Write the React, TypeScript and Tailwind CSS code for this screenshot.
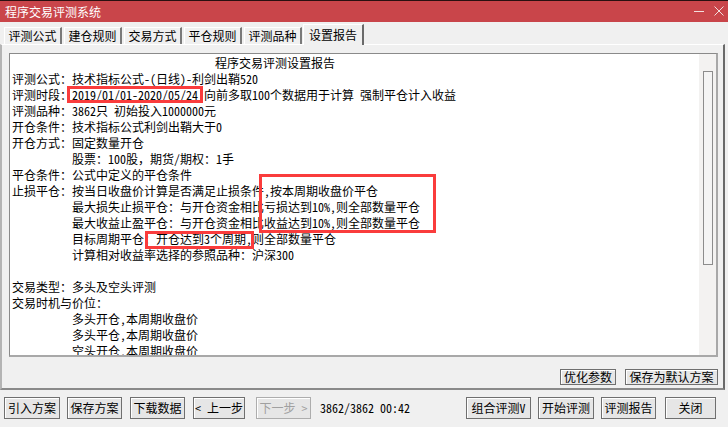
import React from 'react';

const FONT = "font-['Noto_Sans_CJK_SC','Noto_Sans',sans-serif] [font-feature-settings:'hwid']";

const tabs = ['评测公式', '建仓规则', '交易方式', '平仓规则', '评测品种'];

type Line = { label?: string; text: React.ReactNode; indent?: boolean; pad?: string };

const lines: Line[] = [
    { text: '程序交易评测设置报告', pad: 'pl-[203px]' },
    { label: '评测公式：', text: '技术指标公式-(日线)-利剑出鞘520' },
    { label: '评测时段：', text: '2019/01/01-2020/05/24 向前多取100个数据用于计算 强制平仓计入收益' },
    { label: '评测品种：', text: '3862只 初始投入1000000元' },
    { label: '开仓条件：', text: '技术指标公式利剑出鞘大于0' },
    { label: '开仓方式：', text: '固定数量开仓' },
    {
        indent: true,
        text: (
            <>
                股票：100股<span className="[font-feature-settings:normal]">，</span>期货/期权：1手
            </>
        ),
    },
    { label: '平仓条件：', text: '公式中定义的平仓条件' },
    { label: '止损平仓：', text: '按当日收盘价计算是否满足止损条件,按本周期收盘价平仓' },
    { indent: true, text: '最大损失止损平仓：与开仓资金相比亏损达到10%,则全部数量平仓' },
    { indent: true, text: '最大收益止盈平仓：与开仓资金相比收益达到10%,则全部数量平仓' },
    { indent: true, text: '目标周期平仓：开仓达到3个周期,则全部数量平仓' },
    { indent: true, text: '计算相对收益率选择的参照品种：沪深300' },
    { text: '' },
    { label: '交易类型：', text: '多头及空头评测' },
    { label: '交易时机与价位：', text: '' },
    { indent: true, text: '多头开仓,本周期收盘价' },
    { indent: true, text: '多头平仓,本周期收盘价' },
    { indent: true, text: '空头开仓,本周期收盘价' },
];

const Btn: React.FC<{ w: string; h?: string; disabled?: boolean; className?: string; children: React.ReactNode }> = ({ w, h = 'h-[22px]', disabled, className = '', children }) => (
    <div
        className={`${w} ${h} ${className} flex items-center justify-center border ${disabled ? 'border-[#adadad] text-[#a0a0a0]' : 'border-[#6f6f6f] text-black'} bg-[#e6e6e6] shadow-[inset_1px_1px_0_#fff] whitespace-nowrap`}
    >
        {children}
    </div>
);

export default function App() {
    return (
        <div className={`w-[728px] h-[427px] bg-[#f0f0f0] flex flex-col overflow-hidden text-[12px] leading-[16px] ${FONT}`}>
            {/* title bar */}
            <div className="h-[22px] bg-[#c9454a] border-t border-t-[#2a1010] flex items-center relative">
                <span className="ml-[5px] text-white text-[12px]">程序交易评测系统</span>
                <div className="absolute left-[694px] top-[10px] w-[10px] h-px bg-[#f2dede]" />
                <svg className="absolute left-[714px] top-[5px]" width="10" height="10" viewBox="0 0 10 10">
                    <path d="M0.5 0.5 L9.5 9.5 M9.5 0.5 L0.5 9.5" stroke="#f2dede" strokeWidth="1" />
                </svg>
            </div>

            {/* tabs */}
            <div className="h-[22px] flex items-end pl-[4px] gap-[2px]">
                {tabs.map((t) => (
                    <div key={t} className="w-[58px] h-[17px] border-t border-l border-white border-r-2 border-r-[#7a7a7a] flex items-center justify-center">
                        {t}
                    </div>
                ))}
                <div className="relative z-10 ml-[-1px] mb-[-1px] w-[61px] h-[21px] bg-[#f0f0f0] border-t border-l border-white border-r-2 border-r-[#6a6a6a] flex items-center justify-center pb-[1px]">
                    设置报告
                </div>
            </div>

            {/* panel */}
            <div className="h-[346px] w-[725px] border-t border-t-white border-l-2 border-l-[#b4b4b4] border-r-2 border-r-[#6a6a6a] border-b-2 border-b-[#8a8a8a] pl-[7px] pr-[5px] pt-[8px] flex flex-col">
                <div className="relative h-[304px] border border-[#8a8a8a] border-r-2 border-b-2 border-r-[#a8a8a8] border-b-[#a8a8a8] bg-white flex overflow-hidden">
                    <div className="flex-1 pl-[2px] pt-[1px] whitespace-nowrap overflow-hidden text-black">
                        {lines.map((l, i) => (
                            <div key={i} className={`h-[16px] flex ${l.pad ?? ''}`}>
                                {l.indent && <span className="w-[60px] shrink-0" />}
                                {l.label && <span className={l.text ? 'w-[60px] shrink-0' : ''}>{l.label}</span>}
                                <span>{l.text}</span>
                            </div>
                        ))}
                    </div>
                    {/* scrollbar */}
                    <div className="w-[17px] shrink-0 bg-[#f3f2f1] pt-[17px] pl-[4px]">
                        <div className="w-[10px] h-[194px] border border-[#8c8c8c] bg-[#f4f4f4]" />
                    </div>
                    {/* annotation boxes */}
                    <div className="absolute left-[57px] top-[32px] w-[136px] h-[17px] border-[3px] border-[#fa3c3c]" />
                    <div className="absolute left-[249px] top-[120px] w-[177px] h-[59px] border-[3px] border-[#fa3c3c]" />
                    <div className="absolute left-[135px] top-[177px] w-[109px] h-[18px] border-[3px] border-[#fa3c3c]" />
                </div>
                <div className="mt-[12px] flex justify-end gap-[9px]">
                    <Btn w="w-[56px]" h="h-[16px]">优化参数</Btn>
                    <Btn w="w-[93px]" h="h-[16px]">保存为默认方案</Btn>
                </div>
            </div>

            {/* bottom buttons */}
            <div className="pt-[7px] flex items-center">
                <Btn w="w-[56px]" className="ml-[4px]">引入方案</Btn>
                <Btn w="w-[55px]" className="ml-[7px]">保存方案</Btn>
                <Btn w="w-[55px]" className="ml-[8px]">下载数据</Btn>
                <Btn w="w-[52px]" className="ml-[8px]">&lt; 上一步</Btn>
                <Btn w="w-[55px]" className="ml-[11px]" disabled>下一步 &gt;</Btn>
                <span className="ml-[9px]">3862/3862 00:42</span>
                <div className="flex-1" />
                <Btn w="w-[65px]">组合评测V</Btn>
                <Btn w="w-[56px]" className="ml-[7px]">开始评测</Btn>
                <Btn w="w-[55px]" className="ml-[7px]">评测报告</Btn>
                <Btn w="w-[51px]" className="ml-[9px] mr-[12px]">关闭</Btn>
            </div>
        </div>
    );
}
